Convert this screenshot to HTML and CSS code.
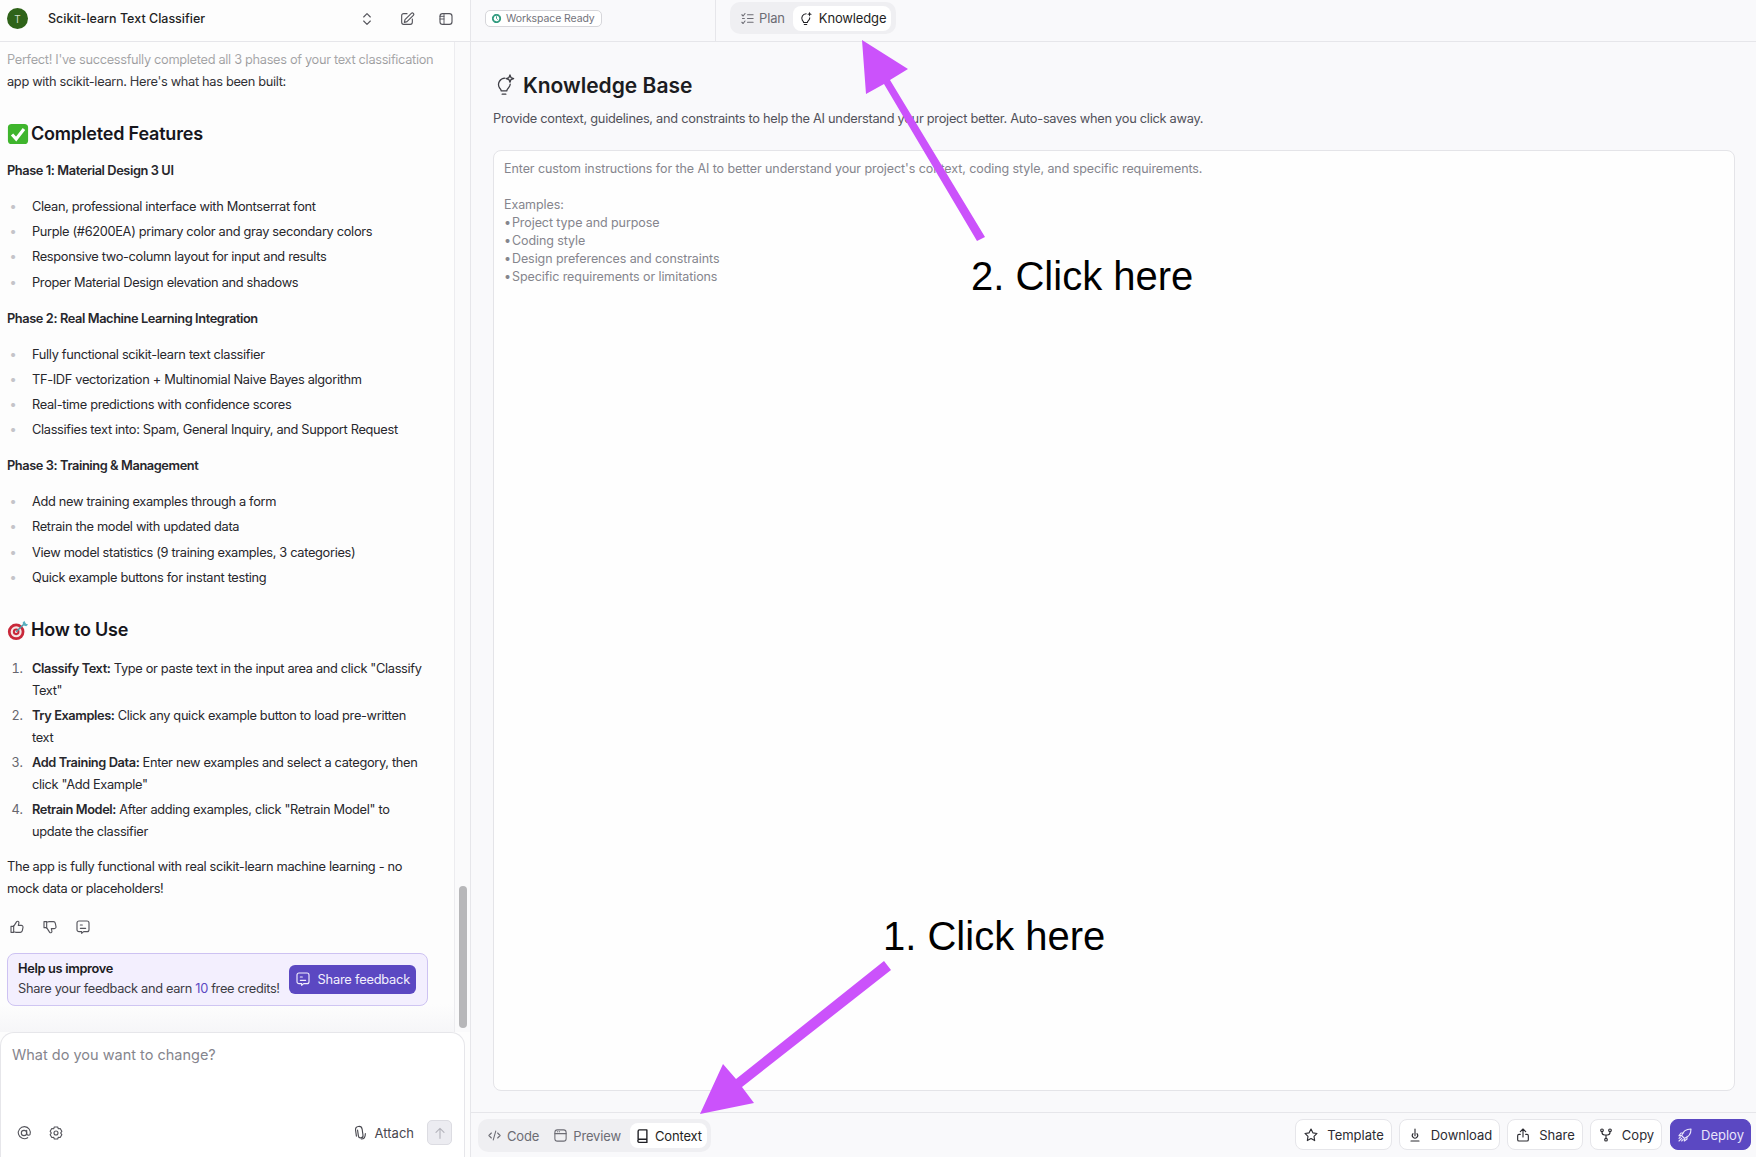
FILE: index.html
```html
<!DOCTYPE html>
<html lang="en">

<head>
    <meta charset="UTF-8">
    <title>Scikit-learn Text Classifier</title>
    <link rel="stylesheet" href="styles.css">
</head>

<body>
    <div class="app">
        <aside class="side">
            <header class="side-head">
                <span class="avatar">T</span>
                <span class="project">Scikit-learn Text Classifier</span>
                <svg class="ic chevrons" viewBox="0 0 24 24"><path d="m7 9 5-5 5 5M7 15l5 5 5-5"/></svg>
                <svg class="ic edit" viewBox="0 0 24 24"><path d="M12 4H7a3 3 0 0 0-3 3v10a3 3 0 0 0 3 3h10a3 3 0 0 0 3-3v-5"/><path d="M18.5 3.5a2.1 2.1 0 0 1 3 3L12 16l-4 1 1-4z"/></svg>
                <svg class="ic panel" viewBox="0 0 24 24"><rect x="3" y="4" width="18" height="16" rx="4"/><path d="M9 4v16M3 8h6M3 12h6" stroke-width="1.4"/></svg>
            </header>

            <div class="chat-wrap">
                <div class="chat">
                    <p>Perfect! I've successfully completed all 3 phases of your text classification app with scikit-learn. Here's what has been built:</p>

                    <h2>
                        <svg class="emoji" viewBox="0 0 24 24"><rect x="1" y="1" width="22" height="22" rx="4" fill="#3fb52d"/><path d="m5.5 12.5 4.5 5 8.5-11" fill="none" stroke="#fff" stroke-width="3.4"/></svg>
                        Completed Features
                    </h2>

                    <h4>Phase 1: Material Design 3 UI</h4>
                    <ul>
                        <li>Clean, professional interface with Montserrat font</li>
                        <li>Purple (#6200EA) primary color and gray secondary colors</li>
                        <li>Responsive two-column layout for input and results</li>
                        <li>Proper Material Design elevation and shadows</li>
                    </ul>

                    <h4>Phase 2: Real Machine Learning Integration</h4>
                    <ul>
                        <li>Fully functional scikit-learn text classifier</li>
                        <li>TF-IDF vectorization + Multinomial Naive Bayes algorithm</li>
                        <li>Real-time predictions with confidence scores</li>
                        <li>Classifies text into: Spam, General Inquiry, and Support Request</li>
                    </ul>

                    <h4>Phase 3: Training &amp; Management</h4>
                    <ul>
                        <li>Add new training examples through a form</li>
                        <li>Retrain the model with updated data</li>
                        <li>View model statistics (9 training examples, 3 categories)</li>
                        <li>Quick example buttons for instant testing</li>
                    </ul>

                    <h2>
                        <svg class="emoji" viewBox="0 0 24 24"><circle cx="10" cy="14" r="9" fill="#c9283a"/><circle cx="10" cy="14" r="6" fill="#f5e6e6"/><circle cx="10" cy="14" r="3.6" fill="#c9283a"/><circle cx="10" cy="14" r="1.4" fill="#f5e6e6"/><path d="m10 14 10-10" stroke="#4d9aa8" stroke-width="1.6"/><path d="m19 2 1 3 3 1-2 2-3-1-1-3z" fill="#58b0c0"/></svg>
                        How to Use
                    </h2>
                    <ol>
                        <li><b>Classify Text:</b> Type or paste text in the input area and click "Classify Text"</li>
                        <li><b>Try Examples:</b> Click any quick example button to load pre-written<br>text</li>
                        <li><b>Add Training Data:</b> Enter new examples and select a category, then click "Add Example"</li>
                        <li><b>Retrain Model:</b> After adding examples, click "Retrain Model" to<br>update the classifier</li>
                    </ol>
                    <p>The app is fully functional with real scikit-learn machine learning - no mock data or placeholders!</p>

                    <div class="reactions">
                        <svg class="ic" viewBox="0 0 24 24"><path d="M7 10v10M3 11h4v9H3zM7 19l3 1h7a3 3 0 0 0 3-2.400l1-5a2.500 2.500 0 0 0-2.500-3H14l.8-3.500A2 2 0 0 0 11.500 4L7 11"/></svg>
                        <svg class="ic" viewBox="0 0 24 24"><path d="M7 4v10M3 4h4v9H3zM7 5l3-1h7a3 3 0 0 1 3 2.400l1 5a2.500 2.500 0 0 1-2.500 3H14l.8 3.500A2 2 0 0 1 11.500 20L7 13"/></svg>
                        <svg class="ic" viewBox="0 0 24 24"><path d="M6 3h12a3 3 0 0 1 3 3v10a3 3 0 0 1-3 3h-5l-3 2.500V19H6a3 3 0 0 1-3-3V6a3 3 0 0 1 3-3z"/><path d="M8 9h3M8 14h8"/></svg>
                    </div>

                    <div class="feedback">
                        <div>
                            <div class="feedback-title">Help us improve</div>
                            <div class="feedback-text">Share your feedback and earn <span>10</span> free credits!</div>
                        </div>
                        <button class="feedback-btn">
                            <svg class="ic" viewBox="0 0 24 24"><path d="M6 3h12a3 3 0 0 1 3 3v10a3 3 0 0 1-3 3h-5l-3 2.500V19H6a3 3 0 0 1-3-3V6a3 3 0 0 1 3-3z"/><path d="M8 9h3M8 14h8"/></svg>
                            Share feedback
                        </button>
                    </div>
                </div>
                <div class="fade-top"></div>
                <div class="fade-bottom"></div>
                <div class="track"><div class="thumb"></div></div>
            </div>

            <div class="composer">
                <div class="composer-text">What do you want to change?</div>
                <div class="composer-row">
                    <svg class="ic" viewBox="0 0 24 24"><circle cx="12" cy="12" r="4"/><path d="M16 8v5a3 3 0 0 0 5 1.500A9 9 0 1 0 17.500 19"/></svg>
                    <svg class="ic" viewBox="0 0 24 24"><path d="M9.500 3h5l1 2.600 2.800-.4 2.400 4.300L19 12l1.700 2.500-2.400 4.300-2.800-.4-1 2.600h-5l-1-2.600-2.800.4-2.400-4.300L5 12 3.300 9.500l2.400-4.300 2.800.4z"/><circle cx="12" cy="12" r="3"/></svg>
                    <span class="attach">
                        <svg class="ic" viewBox="0 0 24 24"><path d="M9 7v9a3.500 3.500 0 0 0 7 0V7a5 5 0 0 0-10 0v9" transform="rotate(-8 12 12)"/><path d="M20 13c0 5-2 8-6 8"/></svg>
                        Attach
                    </span>
                    <span class="send">
                        <svg class="ic" viewBox="0 0 24 24"><path d="M12 20V5M6 11l6-6 6 6"/></svg>
                    </span>
                </div>
            </div>
        </aside>

        <main class="main">
            <header class="top">
                <div class="top-left">
                    <span class="ready">
                        <svg class="ic" viewBox="0 0 24 24"><circle cx="12" cy="12" r="8" stroke-dasharray="4 2.300" stroke-width="4"/><path d="M12 8v4l2 2" stroke-width="2"/></svg>
                        Workspace Ready
                    </span>
                </div>
                <div class="tabs">
                    <span class="tab">
                        <svg class="ic" viewBox="0 0 24 24"><path d="m3 6 2 2 3-4M3 18l2 2 3-4M12 6h9M12 12h9M12 18h9M4 12h3"/></svg>
                        Plan
                    </span>
                    <span class="tab active">
                        <svg class="ic" viewBox="0 0 24 24"><path d="M13 4.500A7 7 0 0 0 7 15c1.200 1.200 2 2 2 3.500h6c0-1.500 1-2.500 2-3.500a6 6 0 0 0 1.800-4"/><path d="M10 21.500h4"/><path d="m18.500 1 1.100 2.900 2.900 1.100-2.900 1.100-1.100 2.900-1.100-2.900-2.900-1.100 2.900-1.100z" fill="currentColor" stroke="none"/></svg>
                        Knowledge
                    </span>
                </div>
            </header>

            <section class="content">
                <h1>
                    <svg class="ic" viewBox="0 0 24 24"><path d="M13 4.500A7 7 0 0 0 7 15c1.200 1.200 2 2 2 3.500h6c0-1.500 1-2.500 2-3.500a6 6 0 0 0 1.800-4"/><path d="M10 22h4"/><path d="m18.500 1 1.100 2.900 2.900 1.100-2.900 1.100-1.100 2.900-1.100-2.900-2.900-1.100 2.900-1.100z"/></svg>
                    Knowledge Base
                </h1>
                <p class="sub">Provide context, guidelines, and constraints to help the AI understand your project better. Auto-saves when you click away.</p>
                <div class="notes">Enter custom instructions for the AI to better understand your project's context, coding style, and specific requirements.

Examples:
<span class="dot">•</span> Project type and purpose
<span class="dot">•</span> Coding style
<span class="dot">•</span> Design preferences and constraints
<span class="dot">•</span> Specific requirements or limitations</div>
            </section>

            <footer class="bottom">
                <div class="tabs">
                    <span class="tab">
                        <svg class="ic" viewBox="0 0 24 24"><path d="m7 8-4 4 4 4M17 8l4 4-4 4M14 5l-4 14"/></svg>
                        Code
                    </span>
                    <span class="tab">
                        <svg class="ic" viewBox="0 0 24 24"><rect x="3" y="3" width="18" height="18" rx="4"/><path d="M3 9h18M7 6h.5M10 6h.5"/></svg>
                        Preview
                    </span>
                    <span class="tab active">
                        <svg class="ic" viewBox="0 0 24 24"><path d="M5 18V5a2 2 0 0 1 2-2h12v15H7a2.500 2.500 0 0 0 0 5h12v-5" stroke-width="2.200"/></svg>
                        Context
                    </span>
                </div>
                <div class="actions">
                    <button class="act act-template">
                        <svg class="ic" viewBox="0 0 24 24"><path d="m12 3 2.800 5.800 6.200.9-4.500 4.400 1 6.300-5.500-3-5.500 3 1-6.300L3 9.700l6.200-.9z"/></svg>
                        Template
                    </button>
                    <button class="act act-download">
                        <svg class="ic" viewBox="0 0 24 24"><path d="M12 3v10M6 21h12M9 10a4 4 0 1 0 6 0"/></svg>
                        Download
                    </button>
                    <button class="act act-share">
                        <svg class="ic" viewBox="0 0 24 24"><path d="M12 15V3M8 7l4-4 4 4M8 11H6a2 2 0 0 0-2 2v6a2 2 0 0 0 2 2h12a2 2 0 0 0 2-2v-6a2 2 0 0 0-2-2h-2"/></svg>
                        Share
                    </button>
                    <button class="act act-copy">
                        <svg class="ic" viewBox="0 0 24 24"><circle cx="6" cy="5" r="2"/><circle cx="18" cy="5" r="2"/><circle cx="12" cy="19" r="2"/><path d="M6 7v1a4 4 0 0 0 4 4h4a4 4 0 0 0 4-4V7M12 12v5"/></svg>
                        Copy
                    </button>
                    <button class="act deploy">
                        <svg class="ic" viewBox="0 0 24 24"><path d="M9 15 7 13c1.500-5 6-10 14-10 0 8-5 12.500-10 14zM7 13H3l3-4h4M11 17v4l4-3v-4M3 21l4-4M3 17l2-2M7 21l2-2"/></svg>
                        Deploy
                    </button>
                </div>
            </footer>
        </main>
    </div>

    <!-- the two callouts drawn over the screenshot -->
    <svg class="arrows" viewBox="0 0 1756 1157">
        <path d="M700 1114 723 1064 736 1079 884 961 891 970 742 1087 754 1103z" fill="#cb52fb"/>
        <path d="M862 40 908 69 890 80 985 237 977 241 884 84 866 94z" fill="#cb52fb"/>
    </svg>
    <div class="callout callout-one">1. Click here</div>
    <div class="callout callout-two">2. Click here</div>
</body>

</html>
```

FILE: styles.css
```css
* {
    box-sizing: border-box;
}

html,
body {
    height: 100%;
}

body {
    margin: 0;
    overflow: hidden;
    background: #f9f9fb;
    color: #1f1f24;
    font-family: Inter, "Liberation Sans", sans-serif;
    font-size: 13px;
}

button {
    font-family: inherit;
    cursor: pointer;
}

.ic {
    width: 16px;
    height: 16px;
    flex: none;
    fill: none;
    stroke: currentColor;
    stroke-width: 1.7;
    stroke-linecap: round;
    stroke-linejoin: round;
}

.app {
    display: flex;
    height: 1157px;
}

/* left panel */
.side {
    display: flex;
    flex-direction: column;
    width: 471px;
    flex: none;
    border-right: 1px solid #e6e6ea;
    background: #fdfdfd;
}

.side-head {
    display: flex;
    align-items: center;
    height: 42px;
    flex: none;
    padding: 0 16px 4px 7px;
    border-bottom: 1px solid #e6e6ea;
}

.avatar {
    display: flex;
    align-items: center;
    justify-content: center;
    width: 21px;
    height: 21px;
    border-radius: 50%;
    background: #2f6319;
    color: #cfdcc8;
    font-size: 10px;
}

.project {
    margin-left: 20px;
    font-size: 12.5px;
    font-weight: 500;
    flex: 1;
}

.side-head .ic {
    color: #55555c;
}

.edit {
    margin-left: 24px;
}

.panel {
    margin-left: 23px;
}

.chat-wrap {
    position: relative;
    display: flex;
    flex: 1;
    min-height: 0;
    overflow: hidden;
}

.chat {
    width: 455px;
    flex: none;
    padding: 7px 17px 0 7px;
    font-size: 12.8px;
    letter-spacing: -0.32px;
    line-height: 22px;
    border-right: 1px solid #ececef;
    color: #27272c;
}

.chat p {
    margin: 0;
}

.chat h2 {
    display: flex;
    align-items: center;
    gap: 2px;
    margin: 27px 0 0;
    height: 28px;
    font-size: 18px;
    font-weight: 600;
    letter-spacing: -0.2px;
    color: #16161c;
}

.emoji {
    width: 22px;
    height: 22px;
    flex: none;
}

.chat h4 {
    margin: 14px 0 0;
    font-size: 12.8px;
    font-weight: 600;
    letter-spacing: -0.4px;
}

.chat h2 + h4 {
    margin-top: 12px;
}

.chat ul,
.chat ol {
    margin: 14px 0 0;
    padding-left: 25px;
}

.chat li {
    margin-bottom: 3.2px;
}

.chat ul li::marker {
    content: "•\00a0\00a0\00a0\00a0\00a0";
    color: #c4c4c9;
}

.chat ol li::marker {
    content: counter(list-item) ".\00a0\00a0\00a0";
    color: #66666e;
}

.chat ol li {
    margin-bottom: 3px;
}

.chat ol li b {
    font-weight: 600;
    letter-spacing: -0.4px;
}

.chat ol + p {
    margin-top: 13px;
}

.reactions {
    display: flex;
    gap: 17px;
    margin: 19px 0 0 2px;
    color: #55555c;
}

.feedback {
    display: flex;
    align-items: center;
    justify-content: space-between;
    height: 53px;
    margin-top: 18px;
    padding: 0 11px 0 10px;
    width: 421px;
    border: 1px solid #cdc2f2;
    border-radius: 8px;
    background: #f3effe;
}

.feedback-title {
    font-weight: 600;
    line-height: 20px;
    color: #1b1b22;
}

.feedback-text {
    line-height: 20px;
    color: #3c3c44;
    white-space: nowrap;
}

.feedback-text span {
    color: #5b48c2;
}

.feedback-btn {
    display: flex;
    align-items: center;
    gap: 7px;
    height: 29px;
    padding: 0 6px;
    border: none;
    border-radius: 6px;
    background: #5b48c2;
    color: #f3f0fd;
    font-size: 12.8px;
    letter-spacing: -0.2px;
    white-space: nowrap;
}

.fade-top {
    position: absolute;
    top: 0;
    left: 0;
    width: 454px;
    height: 42px;
    background: linear-gradient(rgba(253, 253, 253, 0.6) 45%, rgba(253, 253, 253, 0));
}

.fade-bottom {
    position: absolute;
    bottom: 0;
    left: 0;
    width: 454px;
    height: 28px;
    background: linear-gradient(rgba(246, 246, 248, 0), #f6f6f8);
}

.track {
    display: flex;
    align-items: flex-end;
    justify-content: center;
    flex: 1;
    padding-bottom: 4px;
    background: #fafafb;
}

.thumb {
    width: 8px;
    height: 142px;
    border-radius: 4px;
    background: #b7b7b9;
}

.composer {
    display: flex;
    flex-direction: column;
    justify-content: space-between;
    width: 465px;
    height: 125px;
    flex: none;
    padding: 12px 12px 12px 11px;
    border: 1px solid #e6e6ea;
    border-bottom: none;
    border-radius: 14px 14px 0 0;
    background: #fff;
}

.composer-text {
    font-size: 14.5px;
    line-height: 20px;
    color: #85858d;
}

.composer-row {
    display: flex;
    align-items: center;
    gap: 16px;
    padding-left: 4px;
    color: #55555c;
}

.attach {
    display: flex;
    align-items: center;
    gap: 7px;
    margin-left: auto;
    color: #47474e;
}

.send {
    display: flex;
    align-items: center;
    justify-content: center;
    width: 25px;
    height: 25px;
    margin-left: -3px;
    border: 1px solid #dcdce2;
    border-radius: 5px;
    background: #ececf1;
    color: #b4b4bc;
}

/* right side */
.main {
    display: flex;
    flex-direction: column;
    flex: 1;
    min-width: 0;
}

.top {
    display: flex;
    align-items: center;
    height: 42px;
    flex: none;
    padding-bottom: 5px;
    border-bottom: 1px solid #e6e6ea;
}

.top-left {
    display: flex;
    align-items: center;
    width: 245px;
    height: 41px;
    margin-bottom: -5px;
    padding: 0 0 5px 14px;
    border-right: 1px solid #e6e6ea;
}

.ready {
    display: flex;
    align-items: center;
    gap: 4px;
    height: 17px;
    padding: 0 6px 0 5px;
    border: 1px solid #d6d6da;
    border-radius: 5px;
    background: #fff;
    color: #73737b;
    font-size: 10.5px;
    letter-spacing: -0.1px;
    white-space: nowrap;
}

.ready .ic {
    width: 11px;
    height: 11px;
    color: #2f9a7e;
}

.tabs {
    display: flex;
    align-items: center;
    padding: 3px 5px 3px 5px;
    border-radius: 10px;
    background: #efeff2;
}

.top .tabs {
    gap: 3px;
    margin-left: 14px;
    height: 32px;
}

.tab {
    display: flex;
    align-items: center;
    gap: 5px;
    height: 25px;
    padding: 0 5px;
    border-radius: 8px;
    color: #6c6c74;
    font-size: 13px;
    letter-spacing: -0.15px;
    white-space: nowrap;
}

.tab.active {
    background: #fff;
    color: #1f1f24;
}

.tab .ic {
    width: 15px;
    height: 15px;
}

.top .tab {
    gap: 4px;
}

.top .tab.active {
    gap: 6px;
}

.content {
    display: flex;
    flex-direction: column;
    flex: 1;
    min-height: 0;
    padding: 26px 21px 21px 22px;
}

.content h1 {
    display: flex;
    align-items: center;
    gap: 8px;
    margin: 0;
    height: 34px;
    font-size: 21px;
    font-weight: 600;
    color: #1c1c21;
}

.content h1 .ic {
    width: 22px;
    height: 22px;
    color: #3f3f46;
    stroke-width: 1.4;
}

.sub {
    margin: 8px 0 0;
    font-size: 12.8px;
    letter-spacing: -0.27px;
    line-height: 18px;
    color: #51515a;
}

.notes {
    flex: 1;
    margin-top: 22px;
    padding: 9px 10px;
    border: 1px solid #e4e4e8;
    border-radius: 8px;
    background: #fefefe;
    color: #85858d;
    font-size: 12.5px;
    letter-spacing: -0.08px;
    line-height: 18px;
    white-space: pre-line;
}

.dot {
    letter-spacing: -3.5px;
    margin-right: 1px;
}

.bottom {
    display: flex;
    align-items: center;
    justify-content: space-between;
    height: 45px;
    flex: none;
    padding: 0 5px 0 7px;
    border-top: 1px solid #e6e6ea;
}

.bottom .tabs {
    gap: 4px;
    height: 33px;
    margin-top: 1px;
    padding: 4px;
}

.actions {
    display: flex;
    gap: 7px;
}

.act {
    display: flex;
    align-items: center;
    justify-content: center;
    gap: 8px;
    height: 31px;
    margin-bottom: 1px;
    border: 1px solid #e6e6ea;
    border-radius: 8px;
    background: #fff;
    color: #2c2c32;
    font-size: 13px;
}

.act-template { width: 97px; }
.act-download { width: 101px; }
.act-share { width: 76px; }
.act-copy { width: 72px; }

.deploy {
    width: 81px;
    margin-left: 1px;
    border-color: #5b48c2;
    background: #5b48c2;
    color: #e9e5fb;
}

/* overlay */
.arrows {
    position: absolute;
    top: 0;
    left: 0;
    width: 1756px;
    height: 1157px;
    pointer-events: none;
}

.callout {
    position: absolute;
    font-family: "Liberation Sans", Arial, sans-serif;
    font-size: 40px;
    line-height: 46px;
    color: #000;
    white-space: nowrap;
}

.callout-one {
    left: 883px;
    top: 913px;
}

.callout-two {
    left: 971px;
    top: 253px;
}
```
